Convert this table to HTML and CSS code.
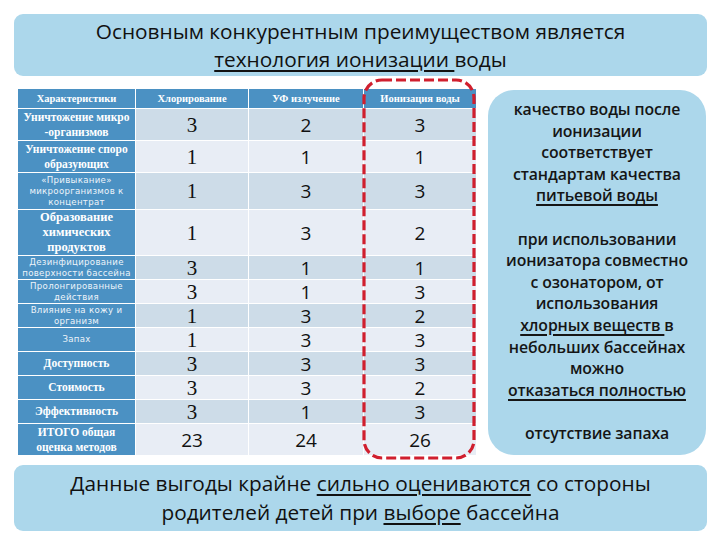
FILE: index.html
```html
<!DOCTYPE html>
<html lang="ru">
<head>
<meta charset="utf-8">
<link rel="stylesheet" href="styles.css">
</head>
<body>
<div class="page">
  <div class="banner banner-top">
    <p>Основным конкурентным преимуществом является</p>
    <p><u>технология ионизации </u>воды</p>
  </div>
  <div class="middle">
    <div class="table-wrap">
      <table class="cmp">
        <colgroup><col class="c1"><col class="c2"><col class="c3"><col class="c4"></colgroup>
        <thead>
          <tr class="h"><th>Характеристики</th><th>Хлорирование</th><th>УФ излучение</th><th>Ионизация воды</th></tr>
        </thead>
        <tbody>
          <tr class="r1 odd"><th class="serif">Уничтожение микро<br>-организмов</th><td class="n1">3</td><td>2</td><td>3</td></tr>
          <tr class="r2 even"><th class="serif">Уничтожение споро<br>образующих</th><td class="n1">1</td><td>1</td><td>1</td></tr>
          <tr class="r3 odd"><th class="sans">«Привыкание»<br>микроорганизмов к<br>концентрат</th><td class="n1">1</td><td>3</td><td>3</td></tr>
          <tr class="r4 even"><th class="serif big">Образование<br>химических<br>продуктов</th><td class="n1">1</td><td>3</td><td>2</td></tr>
          <tr class="rs odd"><th class="sans">Дезинфицирование<br>поверхности бассейна</th><td class="n1">3</td><td>1</td><td>1</td></tr>
          <tr class="rs even"><th class="sans">Пролонгированные<br>действия</th><td class="n1">3</td><td>1</td><td>3</td></tr>
          <tr class="rs odd"><th class="sans">Влияние на кожу и<br>организм</th><td class="n1">1</td><td>3</td><td>2</td></tr>
          <tr class="rs even"><th class="sans">Запах</th><td class="n1">1</td><td>3</td><td>3</td></tr>
          <tr class="rs odd"><th class="serif">Доступность</th><td class="n1">3</td><td>3</td><td>3</td></tr>
          <tr class="rs even"><th class="serif">Стоимость</th><td class="n1">3</td><td>3</td><td>2</td></tr>
          <tr class="rs odd"><th class="serif">Эффективность</th><td class="n1">3</td><td>1</td><td>3</td></tr>
          <tr class="rt even"><th class="serif">ИТОГО общая<br>оценка методов</th><td>23</td><td>24</td><td>26</td></tr>
        </tbody>
      </table>
      <svg class="highlight" width="116" height="384" viewBox="0 0 116 384">
        <rect x="3" y="3" width="110" height="378" rx="18" ry="18" fill="none" stroke="#d01f2e" stroke-width="3.2" stroke-dasharray="10 4"/>
      </svg>
    </div>
    <div class="side">
      <p>качество воды после<br>ионизации<br>соответствует<br>стандартам качества<br><u>питьевой воды</u></p>
      <p>при использовании<br>ионизатора совместно<br>с озонатором, от<br>использования<br><u>хлорных веществ </u>в<br>небольших бассейнах<br>можно<br><u>отказаться полностью</u></p>
      <p>отсутствие запаха</p>
    </div>
  </div>
  <div class="banner banner-bottom">
    <p>Данные выгоды крайне <u>сильно оцениваются</u> со стороны</p>
    <p>родителей детей при <u>выборе</u> бассейна</p>
  </div>
</div>
</body>
</html>
```
FILE: styles.css
```css
html, body {
  margin: 0;
  padding: 0;
  background: #ffffff;
}
.page {
  width: 720px;
  height: 540px;
  box-sizing: border-box;
  padding: 14px 13px 0 14px;
  font-family: "Open Sans", "Noto Sans", sans-serif;
  color: #111;
}
p { margin: 0; }
u { text-decoration-thickness: 1.5px; text-underline-offset: 3px; }

.banner {
  background: #acd7eb;
  border-radius: 9px;
  text-align: center;
  display: flex;
  flex-direction: column;
  justify-content: center;
}
.banner-top {
  height: 62px;
  font-size: 20.8px;
  line-height: 28px;
}
.banner-bottom {
  height: 66px;
  margin-top: 9px;
  font-size: 20.8px;
  line-height: 29px;
}

.middle {
  display: flex;
  align-items: flex-start;
  margin-top: 12px;
}
.table-wrap {
  position: relative;
  margin-left: 3px;
  width: 459px;
}
.cmp {
  width: 459px;
  border-collapse: collapse;
  table-layout: fixed;
}
.cmp col.c1 { width: 118px; }
.cmp col.c2 { width: 113px; }
.cmp col.c3 { width: 115px; }
.cmp col.c4 { width: 113px; }
.cmp th, .cmp td {
  border: 1px solid #ffffff;
  padding: 0 1px;
  text-align: center;
  vertical-align: middle;
}
.cmp th {
  background: #4b91c3;
  color: #ffffff;
}
.cmp tr.h th {
  height: 19px;
  font-family: "Liberation Serif", serif;
  font-weight: bold;
  font-size: 10.5px;
}
.cmp tr.odd td { background: #cddce8; }
.cmp tr.even td { background: #e8edf5; }
.cmp tr.r1 > * { height: 31px; }
.cmp tr.r2 > * { height: 31px; }
.cmp tr.r3 > * { height: 36px; }
.cmp tr.r4 > * { height: 45px; }
.cmp tr.rs > * { height: 23px; }
.cmp tr.rt > * { height: 31px; }

.cmp th.serif {
  font-family: "Liberation Serif", serif;
  font-weight: bold;
  font-size: 11.5px;
  line-height: 15px;
  white-space: nowrap;
}
.cmp th.serif.big {
  font-size: 12.5px;
  line-height: 15px;
}
.cmp th.sans {
  font-family: "DejaVu Sans", sans-serif;
  font-weight: normal;
  font-size: 8.6px;
  line-height: 11px;
  letter-spacing: 0.3px;
  color: #eef4fa;
  white-space: nowrap;
}
.cmp td {
  font-family: "Open Sans", sans-serif;
  font-size: 19px;
  line-height: 20px;
  color: #111;
}
.cmp td.n1 {
  font-family: "Liberation Serif", serif;
  font-size: 21px;
}

.highlight {
  position: absolute;
  left: 344px;
  top: -11px;
}

.side {
  margin-left: 12px;
  margin-top: 2px;
  width: 218px;
  height: 365px;
  box-sizing: border-box;
  background: #acd7eb;
  border-radius: 26px;
  text-align: center;
  font-size: 15.8px;
  font-weight: 600;
  line-height: 21.6px;
  padding-top: 9px;
  color: #151515;
  letter-spacing: -0.1px;
}
.side p + p { margin-top: 21.6px; }
```
